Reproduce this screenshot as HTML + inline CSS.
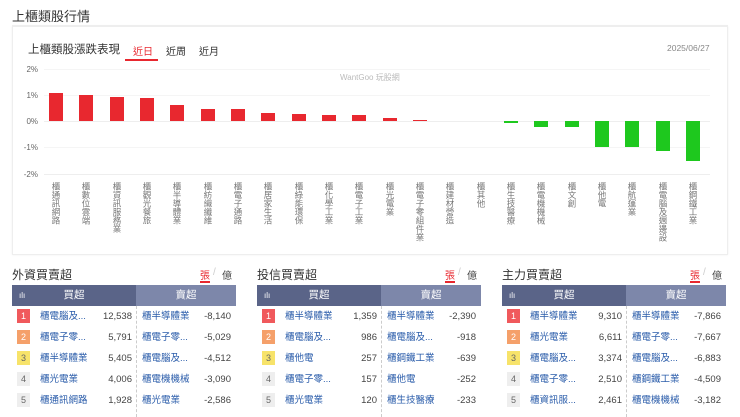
<!DOCTYPE html><html><head><meta charset="utf-8"><style>
*{margin:0;padding:0;box-sizing:border-box}
body{width:740px;height:417px;background:#fff;font-family:"Liberation Sans","Noto Sans CJK TC",sans-serif;position:relative;overflow:hidden;color:#333}
.a{position:absolute}
.card{left:12px;top:26px;width:716px;height:229px;border:1px solid #eee;box-shadow:0 0 2px #eee}
.yl{font-size:8px;color:#666;left:26px;width:12px;text-align:right}
.gl{left:44px;width:666px;height:1px;background:#eee}
.b{width:14px}
.r{background:#e8282f}.g{background:#1ec81e}
.lab{top:182px;writing-mode:vertical-rl;font-size:8.5px;color:#777;width:10px;line-height:10px;letter-spacing:0}
.pt{font-size:12px;color:#333;top:266px}
.tab{font-size:10px;top:267px}
.hd{top:285px;height:21px;color:#fff;font-size:10.5px;line-height:21px;text-align:center}
.row{height:21px;font-size:9.5px;line-height:21px}
.n{position:absolute;left:5px;top:3px;width:13px;height:14px;font-size:9px;line-height:14px;text-align:center;color:#666;background:#eee}
.nm{position:absolute;color:#2a5caa}
.v{position:absolute;text-align:right;color:#444}
</style></head><body>
<div class="a" style="left:12px;top:6px;font-size:13px;color:#333">上櫃類股行情</div>
<div class="a" style="left:12px;top:25px;width:716px;height:1px;background:#eee"></div>
<div class="a card"></div>
<div class="a" style="left:28px;top:41px;font-size:11.5px;color:#333">上櫃類股漲跌表現</div>
<div class="a" style="left:133px;top:43px;font-size:10px;color:#e8282f">近日</div>
<div class="a" style="left:125px;top:59px;width:33px;height:2px;background:#e8282f"></div>
<div class="a" style="left:166px;top:43px;font-size:10px;color:#333">近周</div>
<div class="a" style="left:199px;top:43px;font-size:10px;color:#333">近月</div>
<div class="a" style="left:667px;top:43px;font-size:8.5px;color:#888">2025/06/27</div>
<div class="a" style="left:340px;top:72px;font-size:8px;color:#bbb">WantGoo 玩股網</div>
<div class="a yl" style="top:65px">2%</div><div class="a yl" style="top:91px">1%</div><div class="a yl" style="top:117px">0%</div><div class="a yl" style="top:143px;left:22px;width:16px">-1%</div><div class="a yl" style="top:170px;left:22px;width:16px">-2%</div>
<div class="a gl" style="top:69px;background:#f5f5f5"></div><div class="a gl" style="top:95px;background:#f5f5f5"></div><div class="a gl" style="top:121px"></div><div class="a gl" style="top:147px;background:#f5f5f5"></div><div class="a gl" style="top:174px"></div>
<div class="a b r" style="left:49px;top:93px;height:28px"></div>
<div class="a b r" style="left:79px;top:95px;height:26px"></div>
<div class="a b r" style="left:110px;top:97px;height:24px"></div>
<div class="a b r" style="left:140px;top:98px;height:23px"></div>
<div class="a b r" style="left:170px;top:105px;height:16px"></div>
<div class="a b r" style="left:201px;top:109px;height:12px"></div>
<div class="a b r" style="left:231px;top:109px;height:12px"></div>
<div class="a b r" style="left:261px;top:113px;height:8px"></div>
<div class="a b r" style="left:292px;top:114px;height:7px"></div>
<div class="a b r" style="left:322px;top:115px;height:6px"></div>
<div class="a b r" style="left:352px;top:115px;height:6px"></div>
<div class="a b r" style="left:383px;top:118px;height:3px"></div>
<div class="a b r" style="left:413px;top:120px;height:1px"></div>
<div class="a b g" style="left:504px;top:121px;height:2px"></div>
<div class="a b g" style="left:534px;top:121px;height:6px"></div>
<div class="a b g" style="left:565px;top:121px;height:6px"></div>
<div class="a b g" style="left:595px;top:121px;height:26px"></div>
<div class="a b g" style="left:625px;top:121px;height:26px"></div>
<div class="a b g" style="left:656px;top:121px;height:30px"></div>
<div class="a b g" style="left:686px;top:121px;height:40px"></div>
<div class="a lab" style="left:51px">櫃通訊網路</div>
<div class="a lab" style="left:81px">櫃數位雲端</div>
<div class="a lab" style="left:112px">櫃資訊服務業</div>
<div class="a lab" style="left:142px">櫃觀光餐旅</div>
<div class="a lab" style="left:172px">櫃半導體業</div>
<div class="a lab" style="left:203px">櫃紡織纖維</div>
<div class="a lab" style="left:233px">櫃電子通路</div>
<div class="a lab" style="left:263px">櫃居家生活</div>
<div class="a lab" style="left:294px">櫃綠能環保</div>
<div class="a lab" style="left:324px">櫃化學工業</div>
<div class="a lab" style="left:354px">櫃電子工業</div>
<div class="a lab" style="left:385px">櫃光電業</div>
<div class="a lab" style="left:415px">櫃電子零組件業</div>
<div class="a lab" style="left:445px">櫃建材營造</div>
<div class="a lab" style="left:476px">櫃其他</div>
<div class="a lab" style="left:506px">櫃生技醫療</div>
<div class="a lab" style="left:536px">櫃電機機械</div>
<div class="a lab" style="left:567px">櫃文創</div>
<div class="a lab" style="left:597px">櫃他電</div>
<div class="a lab" style="left:627px">櫃航運業</div>
<div class="a lab" style="left:658px">櫃電腦及週邊設</div>
<div class="a lab" style="left:688px">櫃鋼鐵工業</div>

<div class="a" style="left:12px;top:0">
<div class="a pt" style="left:0;width:120px">外資買賣超</div>
<div class="a tab" style="left:188px;color:#e8282f">張</div><div class="a tab" style="left:201px;color:#ccc">/</div><div class="a tab" style="left:210px;color:#444">億</div>
<div class="a" style="left:188px;top:281px;width:10px;height:2px;background:#e8282f"></div>
<div class="a hd" style="left:0;width:124px;background:#5a6488"><span style="position:absolute;left:7px;font-size:8px">ılı</span>買超</div>
<div class="a hd" style="left:124px;width:100px;background:#7d87aa">賣超</div>
<div class="a" style="left:124px;top:306px;height:111px;border-left:1px dashed #ccc"></div>
<div class="a" style="top:306px;left:0;width:224px">
<div class="row" style="position:relative"><span class="n" style="background:#f0595c;color:#fff">1</span><span class="nm" style="left:28px">櫃電腦及...</span><span class="v" style="left:80px;width:40px">12,538</span><span class="nm" style="left:130px">櫃半導體業</span><span class="v" style="left:175px;width:44px">-8,140</span></div>
<div class="row" style="position:relative"><span class="n" style="background:#f5a06a;color:#fff">2</span><span class="nm" style="left:28px">櫃電子零...</span><span class="v" style="left:80px;width:40px">5,791</span><span class="nm" style="left:130px">櫃電子零...</span><span class="v" style="left:175px;width:44px">-5,029</span></div>
<div class="row" style="position:relative"><span class="n" style="background:#f7e36a">3</span><span class="nm" style="left:28px">櫃半導體業</span><span class="v" style="left:80px;width:40px">5,405</span><span class="nm" style="left:130px">櫃電腦及...</span><span class="v" style="left:175px;width:44px">-4,512</span></div>
<div class="row" style="position:relative"><span class="n">4</span><span class="nm" style="left:28px">櫃光電業</span><span class="v" style="left:80px;width:40px">4,006</span><span class="nm" style="left:130px">櫃電機機械</span><span class="v" style="left:175px;width:44px">-3,090</span></div>
<div class="row" style="position:relative"><span class="n">5</span><span class="nm" style="left:28px">櫃通訊網路</span><span class="v" style="left:80px;width:40px">1,928</span><span class="nm" style="left:130px">櫃光電業</span><span class="v" style="left:175px;width:44px">-2,586</span></div>
</div></div>

<div class="a" style="left:257px;top:0">
<div class="a pt" style="left:0;width:120px">投信買賣超</div>
<div class="a tab" style="left:188px;color:#e8282f">張</div><div class="a tab" style="left:201px;color:#ccc">/</div><div class="a tab" style="left:210px;color:#444">億</div>
<div class="a" style="left:188px;top:281px;width:10px;height:2px;background:#e8282f"></div>
<div class="a hd" style="left:0;width:124px;background:#5a6488"><span style="position:absolute;left:7px;font-size:8px">ılı</span>買超</div>
<div class="a hd" style="left:124px;width:100px;background:#7d87aa">賣超</div>
<div class="a" style="left:124px;top:306px;height:111px;border-left:1px dashed #ccc"></div>
<div class="a" style="top:306px;left:0;width:224px">
<div class="row" style="position:relative"><span class="n" style="background:#f0595c;color:#fff">1</span><span class="nm" style="left:28px">櫃半導體業</span><span class="v" style="left:80px;width:40px">1,359</span><span class="nm" style="left:130px">櫃半導體業</span><span class="v" style="left:175px;width:44px">-2,390</span></div>
<div class="row" style="position:relative"><span class="n" style="background:#f5a06a;color:#fff">2</span><span class="nm" style="left:28px">櫃電腦及...</span><span class="v" style="left:80px;width:40px">986</span><span class="nm" style="left:130px">櫃電腦及...</span><span class="v" style="left:175px;width:44px">-918</span></div>
<div class="row" style="position:relative"><span class="n" style="background:#f7e36a">3</span><span class="nm" style="left:28px">櫃他電</span><span class="v" style="left:80px;width:40px">257</span><span class="nm" style="left:130px">櫃鋼鐵工業</span><span class="v" style="left:175px;width:44px">-639</span></div>
<div class="row" style="position:relative"><span class="n">4</span><span class="nm" style="left:28px">櫃電子零...</span><span class="v" style="left:80px;width:40px">157</span><span class="nm" style="left:130px">櫃他電</span><span class="v" style="left:175px;width:44px">-252</span></div>
<div class="row" style="position:relative"><span class="n">5</span><span class="nm" style="left:28px">櫃光電業</span><span class="v" style="left:80px;width:40px">120</span><span class="nm" style="left:130px">櫃生技醫療</span><span class="v" style="left:175px;width:44px">-233</span></div>
</div></div>

<div class="a" style="left:502px;top:0">
<div class="a pt" style="left:0;width:120px">主力買賣超</div>
<div class="a tab" style="left:188px;color:#e8282f">張</div><div class="a tab" style="left:201px;color:#ccc">/</div><div class="a tab" style="left:210px;color:#444">億</div>
<div class="a" style="left:188px;top:281px;width:10px;height:2px;background:#e8282f"></div>
<div class="a hd" style="left:0;width:124px;background:#5a6488"><span style="position:absolute;left:7px;font-size:8px">ılı</span>買超</div>
<div class="a hd" style="left:124px;width:100px;background:#7d87aa">賣超</div>
<div class="a" style="left:124px;top:306px;height:111px;border-left:1px dashed #ccc"></div>
<div class="a" style="top:306px;left:0;width:224px">
<div class="row" style="position:relative"><span class="n" style="background:#f0595c;color:#fff">1</span><span class="nm" style="left:28px">櫃半導體業</span><span class="v" style="left:80px;width:40px">9,310</span><span class="nm" style="left:130px">櫃半導體業</span><span class="v" style="left:175px;width:44px">-7,866</span></div>
<div class="row" style="position:relative"><span class="n" style="background:#f5a06a;color:#fff">2</span><span class="nm" style="left:28px">櫃光電業</span><span class="v" style="left:80px;width:40px">6,611</span><span class="nm" style="left:130px">櫃電子零...</span><span class="v" style="left:175px;width:44px">-7,667</span></div>
<div class="row" style="position:relative"><span class="n" style="background:#f7e36a">3</span><span class="nm" style="left:28px">櫃電腦及...</span><span class="v" style="left:80px;width:40px">3,374</span><span class="nm" style="left:130px">櫃電腦及...</span><span class="v" style="left:175px;width:44px">-6,883</span></div>
<div class="row" style="position:relative"><span class="n">4</span><span class="nm" style="left:28px">櫃電子零...</span><span class="v" style="left:80px;width:40px">2,510</span><span class="nm" style="left:130px">櫃鋼鐵工業</span><span class="v" style="left:175px;width:44px">-4,509</span></div>
<div class="row" style="position:relative"><span class="n">5</span><span class="nm" style="left:28px">櫃資訊服...</span><span class="v" style="left:80px;width:40px">2,461</span><span class="nm" style="left:130px">櫃電機機械</span><span class="v" style="left:175px;width:44px">-3,182</span></div>
</div></div>
</body></html>
